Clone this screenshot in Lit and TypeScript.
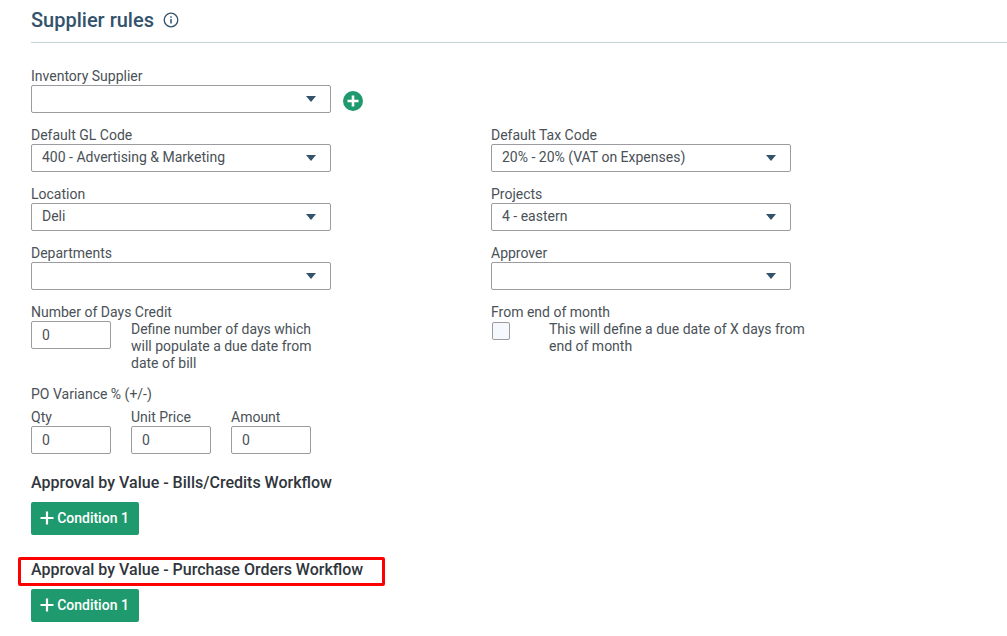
import { LitElement, html, css } from "lit";
import { customElement } from "lit/decorators.js";

@customElement("app-root")
export class AppRoot extends LitElement {
  static styles = css`
    :host { display: block; height: 636px; overflow: hidden; background: #fff; font-family: Roboto, "Liberation Sans", sans-serif; font-size: 14px; color: #4a5157; }
    * { box-sizing: border-box; }
    .page { padding: 0 0 0 31px; }
    .title { display: flex; align-items: center; gap: 9px; height: 42px; margin-bottom: 24px; padding-bottom: 2px; font-size: 20px; font-weight: 500; color: #33526b; }
    .title svg { display: block; }
    .rule { height: 1px; background: #c5d3d8; margin: -24px 0 23px; }
    .grid { display: grid; grid-template-columns: 300px 300px; column-gap: 160px; row-gap: 12px; align-items: start; }
    label, .lab { display: block; height: 19px; line-height: 21px; }
    .sel { display: flex; align-items: center; justify-content: space-between; width: 300px; height: 28px; border: 1px solid #9b9ba0; border-radius: 2px; padding: 0 14px 2px 10px; background: #fff; white-space: nowrap; }
    .sel i { width: 0; height: 0; margin-top: 2px; border-left: 5.5px solid transparent; border-right: 5.5px solid transparent; border-top: 6px solid #33526b; }
    .with-add { position: relative; }
    .add { position: absolute; left: 312px; top: 25px; }
    .num { width: 80px; height: 28px; border: 1px solid #9b9ba0; border-radius: 2px; padding: 0 10px; display: flex; align-items: center; background: #fff; }
    .credit { display: flex; gap: 20px; }
    .help { line-height: 17px; width: 190px; }
    .eom { display: flex; }
    .box { width: 18px; height: 18px; margin-top: 1px; margin-left: 1px; border: 1px solid #9b9ba0; border-radius: 2px; background: #f5f9fd; flex: none; }
    .eom .help { flex: none; width: 262px; margin-left: 39px; }
    .po { margin-top: 12px; }
    .po-row { display: flex; gap: 20px; margin-top: 4px; }
    h3 { position: relative; margin: 0; font-size: 16px; font-weight: 500; line-height: 19px; color: #30363c; }
    .h1 { margin-top: 19px; }
    .h2 { margin-top: 25px; }
    .mark { position: absolute; left: -13px; top: -3px; width: 367px; height: 29px; border: 3px solid #f00; border-radius: 2px; }
    .btn { display: flex; align-items: center; justify-content: center; gap: 3px; width: 108px; height: 33px; margin-top: 10px; padding-bottom: 1px; border-radius: 2px; background: #1f9a6e; color: #fff; font-size: 14px; font-weight: 500; }
    .btn svg { margin-left: -1px; }
  `;

  private sel(label: string, value = "") {
    return html`<div><label>${label}</label><div class="sel"><span>${value}</span><i></i></div></div>`;
  }

  private num(label: string) {
    return html`<div><label>${label}</label><div class="num">0</div></div>`;
  }

  private btn() {
    return html`<div class="btn">
      <svg width="14" height="14" viewBox="0 0 14 14"><path d="M7 .5v13M.5 7h13" stroke="#fff" stroke-width="2.2" fill="none"/></svg>
      <span>Condition 1</span>
    </div>`;
  }

  render() {
    return html`<div class="page">
      <div class="title">
        <span>Supplier rules</span>
        <svg width="16" height="16" viewBox="0 0 16 16"><circle cx="8" cy="8" r="6.8" fill="none" stroke="#33526b" stroke-width="1.3"/><path d="M8 7v4.6M8 4.2v1.6" stroke="#33526b" stroke-width="1.5" fill="none"/></svg>
      </div>
      <div class="rule"></div>
      <div class="grid">
        <div class="with-add">
          ${this.sel("Inventory Supplier")}
          <svg class="add" width="20" height="20" viewBox="0 0 20 20"><circle cx="10" cy="10" r="10" fill="#1f9a6e"/><path d="M10 4.5v11M4.5 10h11" stroke="#fff" stroke-width="2.6"/></svg>
        </div>
        <div></div>
        ${this.sel("Default GL Code", "400 - Advertising & Marketing")}
        ${this.sel("Default Tax Code", "20% - 20% (VAT on Expenses)")}
        ${this.sel("Location", "Deli")}
        ${this.sel("Projects", "4 - eastern")}
        ${this.sel("Departments")}
        ${this.sel("Approver")}
        <div>
          <label>Number of Days Credit</label>
          <div class="credit">
            <div class="num">0</div>
            <div class="help">Define number of days which will populate a due date from date of bill</div>
          </div>
        </div>
        <div>
          <label>From end of month</label>
          <div class="eom">
            <div class="box"></div>
            <div class="help">This will define a due date of X days from end of month</div>
          </div>
        </div>
      </div>
      <div class="po">
        <div class="lab">PO Variance % (+/-)</div>
        <div class="po-row">
          ${this.num("Qty")}${this.num("Unit Price")}${this.num("Amount")}
        </div>
      </div>
      <h3 class="h1">Approval by Value - Bills/Credits Workflow</h3>
      ${this.btn()}
      <h3 class="h2">Approval by Value - Purchase Orders Workflow<span class="mark"></span></h3>
      ${this.btn()}
    </div>`;
  }
}
